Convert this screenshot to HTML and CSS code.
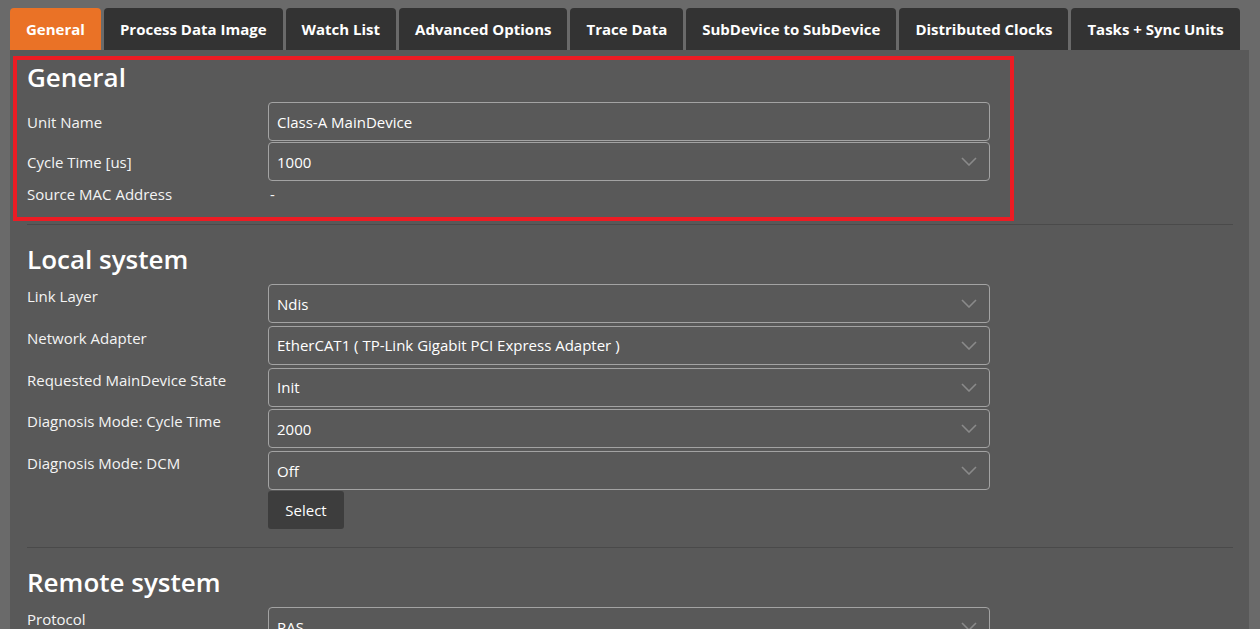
FILE: index.html
```html
<!DOCTYPE html>
<html lang="en">
<head>
    <meta charset="UTF-8">
    <meta name="viewport" content="width=device-width, initial-scale=1.0">
    <title>MainDevice Settings</title>
    <link rel="stylesheet" href="styles.css">
</head>
<body>

    <!-- Tab bar -->
    <nav class="tabs">
        <a href="#" class="tab active">General</a>
        <a href="#" class="tab">Process Data Image</a>
        <a href="#" class="tab">Watch List</a>
        <a href="#" class="tab">Advanced Options</a>
        <a href="#" class="tab">Trace Data</a>
        <a href="#" class="tab">SubDevice to SubDevice</a>
        <a href="#" class="tab">Distributed Clocks</a>
        <a href="#" class="tab">Tasks + Sync Units</a>
    </nav>

    <div class="panel">

        <!-- General -->
        <section class="group group-first">
            <div class="marker"></div>
            <h3>General</h3>
            <div class="rows rows-center">
                <label class="lbl">Unit Name</label>
                <div class="field">Class-A MainDevice</div>

                <label class="lbl">Cycle Time [us]</label>
                <div class="field select">
                    <span>1000</span>
                    <svg class="chev" width="16" height="9" viewBox="0 0 16 9"><path d="M1 1l7 7 7-7" fill="none" stroke="#8a8a8a" stroke-width="1.6"/></svg>
                </div>

                <label class="lbl">Source MAC Address</label>
                <div class="value">-</div>
            </div>
        </section>

        <!-- Local system -->
        <section class="group">
            <h3>Local system</h3>
            <div class="rows">
                <label class="lbl">Link Layer</label>
                <div class="field select">
                    <span>Ndis</span>
                    <svg class="chev" width="16" height="9" viewBox="0 0 16 9"><path d="M1 1l7 7 7-7" fill="none" stroke="#8a8a8a" stroke-width="1.6"/></svg>
                </div>

                <label class="lbl">Network Adapter</label>
                <div class="field select">
                    <span>EtherCAT1 ( TP-Link Gigabit PCI Express Adapter )</span>
                    <svg class="chev" width="16" height="9" viewBox="0 0 16 9"><path d="M1 1l7 7 7-7" fill="none" stroke="#8a8a8a" stroke-width="1.6"/></svg>
                </div>

                <label class="lbl">Requested MainDevice State</label>
                <div class="field select">
                    <span>Init</span>
                    <svg class="chev" width="16" height="9" viewBox="0 0 16 9"><path d="M1 1l7 7 7-7" fill="none" stroke="#8a8a8a" stroke-width="1.6"/></svg>
                </div>

                <label class="lbl">Diagnosis Mode: Cycle Time</label>
                <div class="field select">
                    <span>2000</span>
                    <svg class="chev" width="16" height="9" viewBox="0 0 16 9"><path d="M1 1l7 7 7-7" fill="none" stroke="#8a8a8a" stroke-width="1.6"/></svg>
                </div>

                <label class="lbl">Diagnosis Mode: DCM</label>
                <div class="cell">
                    <div class="field select">
                        <span>Off</span>
                        <svg class="chev" width="16" height="9" viewBox="0 0 16 9"><path d="M1 1l7 7 7-7" fill="none" stroke="#8a8a8a" stroke-width="1.6"/></svg>
                    </div>
                    <button type="button" class="btn">Select</button>
                </div>
            </div>
        </section>

        <!-- Remote system -->
        <section class="group">
            <h3>Remote system</h3>
            <div class="rows">
                <label class="lbl">Protocol</label>
                <div class="field select">
                    <span>RAS</span>
                    <svg class="chev" width="16" height="9" viewBox="0 0 16 9"><path d="M1 1l7 7 7-7" fill="none" stroke="#8a8a8a" stroke-width="1.6"/></svg>
                </div>

                <label class="lbl">Port</label>
                <div class="field">6000</div>
            </div>
        </section>

    </div>

</body>
</html>
```

FILE: styles.css
```css
body {
    margin: 0;
    padding: 8px 11px 0 10px;
    background-color: #6a6a6a;
    font-family: "Open Sans", "Noto Sans", sans-serif;
    color: #f4f4f4;
    overflow: hidden;
}

/* tabs */
.tabs {
    display: flex;
    gap: 3px;
    height: 42px;
}

.tab {
    display: flex;
    align-items: center;
    padding: 0 16px;
    background: #333333;
    color: #ffffff;
    font-size: 15px;
    font-weight: 700;
    text-decoration: none;
    border-radius: 4px 4px 0 0;
    white-space: nowrap;
}

.tab.active {
    background: #ea7226;
}

/* content panel */
.panel {
    background: #595959;
    padding: 0 16px 40px 17px;
    min-height: 700px;
}

.group {
    position: relative;
    padding: 17px 0 18px;
    border-bottom: 1px solid #4a4a4a;
}

.group-first {
    padding-top: 10px;
}

.marker {
    position: absolute;
    top: 6px;
    left: -14px;
    width: 1001px;
    height: 165px;
    box-sizing: border-box;
    border: 4px solid #ed1c24;
    pointer-events: none;
}

h3 {
    margin: 0 0 8px;
    font-size: 26px;
    line-height: 34px;
    font-weight: 600;
    color: #ffffff;
}

.rows {
    display: grid;
    grid-template-columns: 241px 722px;
    row-gap: 2.75px;
    align-items: start;
}

.rows-center {
    row-gap: 1px;
    align-items: center;
}

.lbl {
    font-size: 15px;
    line-height: 22px;
    padding-top: 1px;
}

.rows-center .lbl {
    padding-top: 0;
    line-height: 24px;
}

.field {
    height: 39px;
    box-sizing: border-box;
    border: 1px solid #a3a3a3;
    border-radius: 4px;
    padding: 0 8px;
    display: flex;
    align-items: center;
    justify-content: space-between;
    font-size: 15px;
    color: #ffffff;
}

.chev {
    margin-right: 4px;
}

.value {
    font-size: 15px;
    line-height: 24px;
    padding-left: 2px;
}

.btn {
    display: block;
    margin-top: 1px;
    width: 76px;
    height: 38px;
    background: #3d3d3d;
    color: #ffffff;
    border: none;
    border-radius: 3px;
    font-family: inherit;
    font-size: 15px;
    cursor: pointer;
}
```
